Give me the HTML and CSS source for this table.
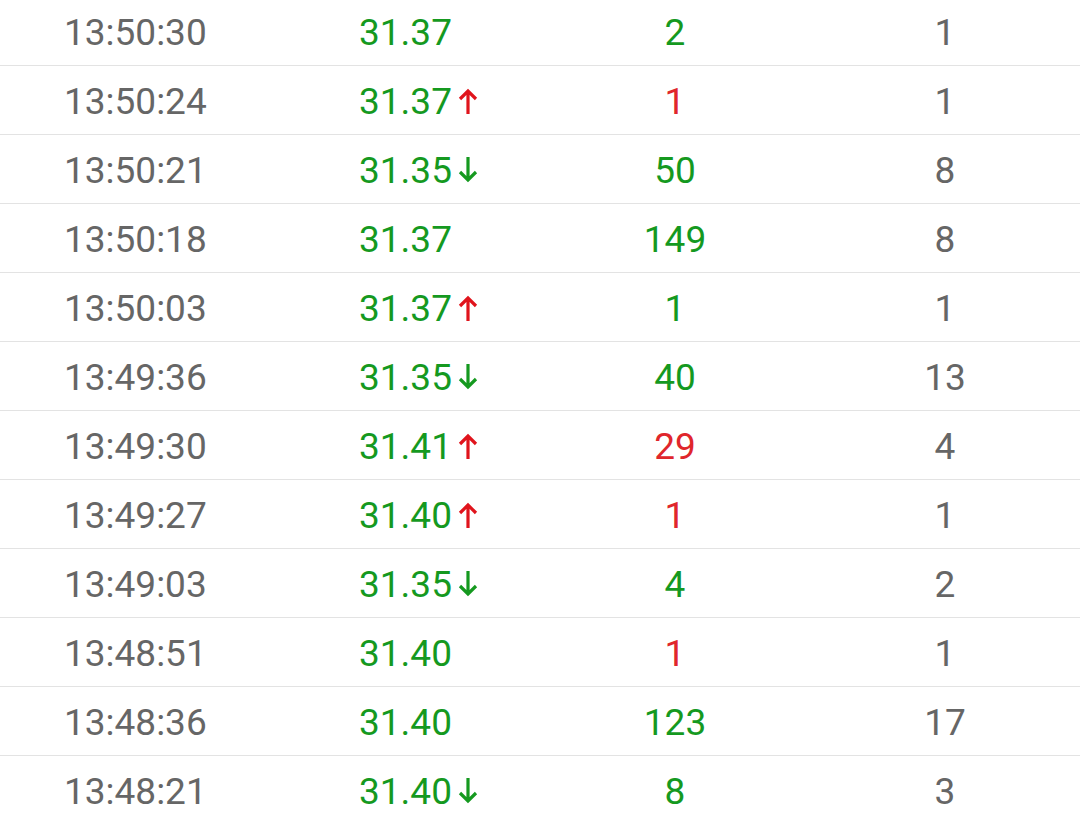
FILE: index.html
```html
<!DOCTYPE html>
<html lang="zh">

<head>
    <meta charset="utf-8">
    <meta name="viewport" content="width=device-width, initial-scale=1.0">
    <title>成交明细</title>
    <link rel="stylesheet" href="styles.css">
</head>

<body>
    <main class="ticks"></main>

    <template>
        <div class="tick">
            <span class="tid"></span>
            <span class="pris"></span>
            <span class="vol"></span>
            <span class="antal"></span>
        </div>
    </template>

    <script>
        // tid, pris, pil (op/ned/ingen), volumen, farve paa volumen, antal
        const handler = [
            ["13:50:30", "31.37", "", "2", "gron", "1"],
            ["13:50:24", "31.37", "op", "1", "rod", "1"],
            ["13:50:21", "31.35", "ned", "50", "gron", "8"],
            ["13:50:18", "31.37", "", "149", "gron", "8"],
            ["13:50:03", "31.37", "op", "1", "gron", "1"],
            ["13:49:36", "31.35", "ned", "40", "gron", "13"],
            ["13:49:30", "31.41", "op", "29", "rod", "4"],
            ["13:49:27", "31.40", "op", "1", "rod", "1"],
            ["13:49:03", "31.35", "ned", "4", "gron", "2"],
            ["13:48:51", "31.40", "", "1", "rod", "1"],
            ["13:48:36", "31.40", "", "123", "gron", "17"],
            ["13:48:21", "31.40", "ned", "8", "gron", "3"]
        ];

        const pilOp = '<svg class="pil op" viewBox="0 0 20 26"><path d="M10 26V3M2 11L10 3l8 8"/></svg>';
        const pilNed = '<svg class="pil ned" viewBox="0 0 20 26"><path d="M10 0v23M2 15L10 23l8-8"/></svg>';

        function visHandler() {
            const dest = document.querySelector(".ticks");
            const skabelon = document.querySelector("template").content;
            handler.forEach(h => {
                const klon = skabelon.cloneNode(true);
                klon.querySelector(".tid").textContent = h[0];
                const pris = klon.querySelector(".pris");
                pris.textContent = h[1];
                if (h[2] == "op") pris.insertAdjacentHTML("beforeend", pilOp);
                if (h[2] == "ned") pris.insertAdjacentHTML("beforeend", pilNed);
                const vol = klon.querySelector(".vol");
                vol.textContent = h[3];
                vol.classList.add(h[4]);
                klon.querySelector(".antal").textContent = h[5];
                dest.appendChild(klon);
            })
        }

        visHandler();
    </script>
</body></html>
```
FILE: styles.css
```css
* {
    padding: 0;
    margin: 0;
    box-sizing: border-box;
}

body {
    background-color: #ffffff;
    font-family: Roboto, "Noto Sans", sans-serif;
    overflow: hidden;
}

.ticks {
    margin-top: -3px;
}

.tick {
    display: grid;
    grid-template-columns: 295px 176px 280px 260px;
    padding-left: 64px;
    padding-top: 2px;
    align-items: center;
    height: 69px;
    border-bottom: 1px solid #e3e3e3;
    font-size: 37px;
    color: #666666;
}

.pris {
    color: #15991f;
    white-space: nowrap;
}

.vol,
.antal {
    text-align: center;
}

.gron {
    color: #15991f;
}

.rod {
    color: #e0262c;
}

.pil {
    width: 20px;
    height: 26px;
    margin-left: 6px;
    fill: none;
    stroke-width: 3.2;
}

.pil.op {
    stroke: #e0141c;
}

.pil.ned {
    stroke: #15991f;
}
```
